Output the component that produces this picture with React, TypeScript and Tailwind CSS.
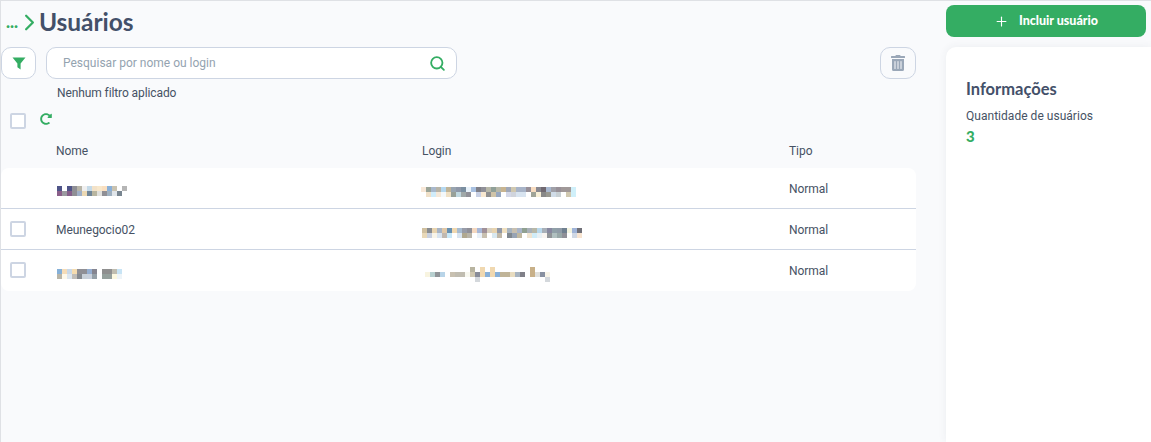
import { ChevronRight, Plus, Search } from "lucide-react";
import { FaRedoAlt, FaTrashAlt } from "react-icons/fa";

// blurred (pixelated) personal data: one string per row, "-" leaves the cell empty
const namePixels1 = [
  "4f5488 ------ 4f5488 8f8f95 b8b5a8 f0f0f0 c5dae8 f3e2c8 f8e8cc fadfc0 8ab0d8 c9c2b0 ------ b5b5b5",
  "8a5f8a 9a9aa0 855e8a 8f8f95 a0b0c8 ecd9b4 708598 b8b5a0 e0e0dc 8f8f95 9fb0c0 e0e5ea 788590 ------",
];
const namePixels3 = [
  "85b0d8 f5dcb8 c8d8e8 f5dcb0 8f8f95 8f8f95 95aed0 858590 ------ 8f8f8f 8f8f8f c0bdb0 c8e4f5",
  "b8b5a8 fdf8ea dce6f0 c0bdb8 858a90 c8d0d8 c8d0dc 95a0a8 ------ 95a09c 95a09c fcf8e0 eef4f8",
];
const loginPixels1 = [
  "f8e8d8 9aa498 a8b8cc b8b5a8 b5d8f0 c0b498 98a4b0 8f98a8 7a8ea0 e8f2fa a8c0e0 808088 909098 b8b8a8 90a098 b8b8a8 c8b490 a0a8b8 d0c8b0 a8b4c8 a8b4c8 989098 f8dcc0 888890 706870 a8b8d0 a0a0a8 989098 a09898 a09898 d0f0fa",
  "------ f0e0c8 d0ecfa f5e8d8 f4f8fa f0e0c4 98a098 c0d8e0 a0a8a8 909098 ------ c8d0e4 f8e8d0 909090 d0c4a8 98a8c0 ------ d4d8e8 d0d4dc d8e4f0 d8e4f0 ------ a0a498 f8f0d8 888888 989890 d0dce8 c8d0d4 ------ d0c8b0 d0f0fa",
];
const loginPixels2 = [
  "d0c0a0 888c90 e8d4b0 a8b4c4 e0c8a8 6890b0 f0d8b0 a8bcd0 989ca8 909098 f4d8c0 a8b8d8 a09098 d8d0c0 e8d4b0 9098a8 f0e0c0 a8b4c0 c8c0b0 a8b4c8 90a090 a8b0b8 b8b8a8 b8d8ec a8b0b8 8888a0 90a0a8 909ca8 708090 f4f4e0 a0b4d8 707078",
  "e8d8b8 c8d0e0 f8f4e8 d8e4f0 c0b8b0 c8e8f8 ------ d8e4f0 b0a890 b8b4a8 ------ e8f0f8 c8c0b0 ------ d8e8f0 c0b8a8 ------ 808890 98a4b4 c0b8a0 ------ f0e4d0 d0ecf8 e8f0f4 f8f4f0 909498 b0c0c0 98a8a8 909098 ------ d0d8e4 f8e4d0",
];
const loginPixels3 = [
  "------ ------ ------ ------ ------ ------ ------ ------ ------ b8b4a0 ------ f0d8b0 ------ f0d8b0 ------ ------ ------ ------ ------ ------ ------ c8b088",
  "f8f4e0 b8d0d0 909498 b8d4e8 ------ c8c0b0 c0bcb0 c0bcb0 f8f8f0 d0c8b0 888c98 f0d8b0 88b0d8 f0d8b0 88b0d8 c0b498 c0b498 e8dcc0 a8b4c0 808088 ------ c8b088 e0e0dc 8890a0 f8f4e8",
  "------ ------ ------ ------ ------ ------ ------ ------ ------ ------ d4d8dc ------ ------ ------ ------ ------ ------ ------ ------ ------ ------ ------ ------ ------ d4d8dc",
];

const Pixels = ({ rows, className }: { rows: string[]; className: string }) => (
  <div className={`flex flex-col ${className}`}>
    {rows.map((row, i) => (
      <div key={i} className="flex">
        {row.split(" ").map((c, j) => (
          <div
            key={j}
            className="w-[5px] h-[5px]"
            style={{ backgroundColor: c.startsWith("-") ? "transparent" : `#${c}` }}
          />
        ))}
      </div>
    ))}
  </div>
);

const Check = () => (
  <div className="w-[16px] h-[16px] rounded-[2px] border-2 border-[#cdd5e3] bg-white" />
);

const Row = ({
  check,
  name,
  login,
  border,
  textClass,
}: {
  check: boolean;
  name: React.ReactNode;
  login: React.ReactNode;
  border: boolean;
  textClass: string;
}) => (
  <div
    className={`relative h-[41px] grid grid-cols-[366px_367px_1fr] pl-[55px] items-center ${
      border ? "border-b border-[#cdd5e3]" : ""
    }`}
  >
    {check && (
      <div className="absolute left-[9px] top-[12px]">
        <Check />
      </div>
    )}
    <div>{name}</div>
    <div>{login}</div>
    <div className={textClass}>Normal</div>
  </div>
);

export default function App() {
  return (
    <div className="w-[1151px] h-[442px] overflow-hidden flex bg-[#f9fafc] border-t border-l border-[#dfe1e5] font-['Roboto',sans-serif] text-[12px] tracking-[-0.06px] text-[#465264]">
      <main className="w-[915px] shrink-0 flex flex-col">
        <div className="h-[46px] pt-[6px] pl-[5px] flex items-start">
          <span className="text-[#34ad63] font-black text-[17px] leading-[30px] font-['Lato',sans-serif]">
            ...
          </span>
          <ChevronRight size={27} strokeWidth={2} className="text-[#34ad63] ml-[-2px] mt-[2px] mr-[-4px]" />
          <h1 className="text-[24.5px] leading-[30px] font-bold text-[#435069] font-['Lato',sans-serif]">
            Usuários
          </h1>
        </div>

        <div className="flex items-center h-[32px]">
          <button className="w-[35px] h-[32px] rounded-[10px] border border-[#cdd5e3] bg-white flex items-center justify-center">
            <svg width="14" height="13" viewBox="0 0 14 13" className="text-[#34ad63]">
              <path d="M0.5 0.5H13.5L8.6 6.6V12.5L5.4 10.2V6.6Z" fill="currentColor" />
            </svg>
          </button>
          <div className="ml-[10px] w-[411px] h-[32px] rounded-[10px] border border-[#cdd5e3] bg-white flex items-center pl-[16px] pr-[10px]">
            <span className="flex-1 text-[#94a3b0] tracking-normal">Pesquisar por nome ou login</span>
            <Search size={17} strokeWidth={2.6} className="text-[#34ad63]" />
          </div>
          <button className="ml-auto w-[36px] h-[32px] rounded-[10px] border border-[#cdd5e3] bg-transparent flex items-center justify-center">
            <FaTrashAlt size={16} className="text-[#9aa7b8]" />
          </button>
        </div>

        <div className="pl-[56px] mt-[6px] leading-[16px] tracking-[-0.1px]">Nenhum filtro aplicado</div>

        <div className="pl-[9px] mt-[5px] h-[24px] flex items-start gap-[14px]">
          <div className="mt-[7px]">
            <Check />
          </div>
          <FaRedoAlt size={12} className="text-[#34ad63] mt-[7px]" />
        </div>

        <div className="grid grid-cols-[366px_367px_1fr] pl-[55px] mt-[13px] h-[25px] items-start leading-[16px]">
          <div>Nome</div>
          <div>Login</div>
          <div>Tipo</div>
        </div>

        <div className="bg-white rounded-[8px] h-[123px] flex flex-col">
          <Row
            check={false}
            border
            textClass="pt-[2px]"
            name={<Pixels rows={namePixels1} className="mt-[6px] ml-px" />}
            login={<Pixels rows={loginPixels1} className="mt-[8px] -ml-px" />}
          />
          <Row
            check
            border
            textClass="pt-[2px]"
            name={<span className="block pt-[2px]">Meunegocio02</span>}
            login={<Pixels rows={loginPixels2} className="mt-[8px]" />}
          />
          <Row
            check
            border={false}
            textClass=""
            name={<Pixels rows={namePixels3} className="mt-[7px] ml-px" />}
            login={<Pixels rows={loginPixels3} className="mt-[8px] ml-[3px]" />}
          />
        </div>
      </main>

      <aside className="ml-[30px] flex-1 flex flex-col">
        <button className="w-[200px] h-[32px] mt-[4px] rounded-[8px] bg-[#34ad63] text-white flex items-center justify-center gap-[10px] font-['Lato',sans-serif] font-black tracking-normal text-[12.5px]">
          <Plus size={15} strokeWidth={1.8} />
          Incluir usuário
        </button>
        <div className="mt-[10px] flex-1 bg-white rounded-tl-[10px] shadow-[0_0_8px_rgba(60,70,90,0.07)] pl-[20px] pt-[32px]">
          <h2 className="font-['Lato',sans-serif] font-bold text-[16.5px] tracking-normal leading-[20px] text-[#435069]">
            Informações
          </h2>
          <p className="mt-[9px] leading-[16px] tracking-[0.03px]">Quantidade de usuários</p>
          <p className="mt-[3px] font-['Lato',sans-serif] font-black text-[15px] leading-[18px] text-[#34ad63]">3</p>
        </div>
      </aside>
    </div>
  );
}
